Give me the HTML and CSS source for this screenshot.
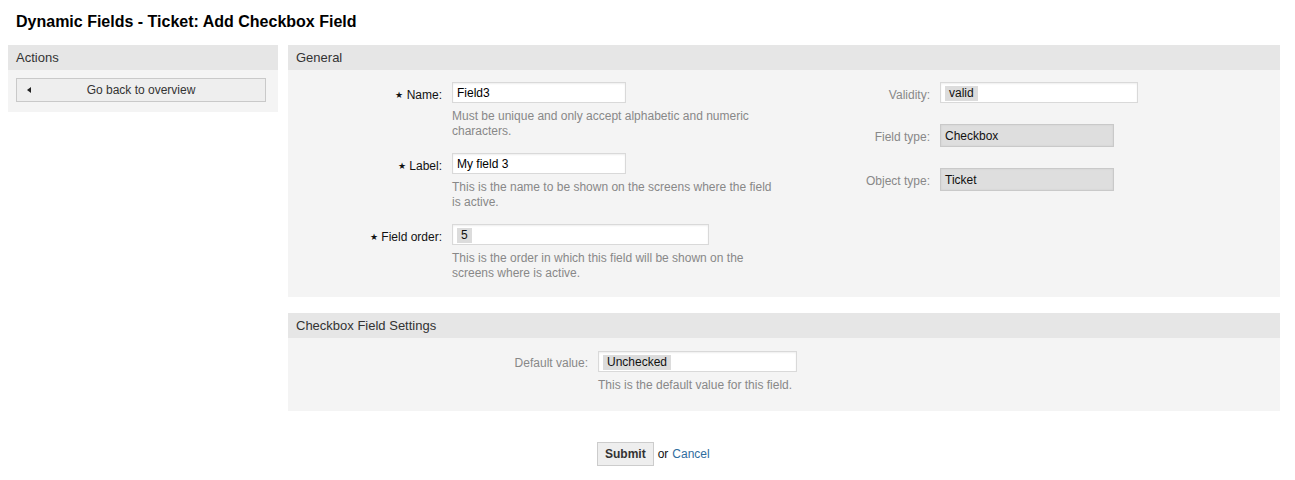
FILE: index.html
```html
<!DOCTYPE html>
<html lang="en">
<head>
<meta charset="utf-8">
<title>Dynamic Fields - Ticket: Add Checkbox Field</title>
<link rel="stylesheet" href="styles.css">
</head>
<body>
<h1 class="page-title">Dynamic Fields - Ticket: Add Checkbox Field</h1>
<div class="layout">
  <aside class="sidebar">
    <div class="box-header">Actions</div>
    <div class="box-body sidebar-body">
      <a class="back-btn" href="#"><span class="tri"></span><span class="back-text">Go back to overview</span></a>
    </div>
  </aside>
  <main class="main">
    <section class="box">
      <div class="box-header">General</div>
      <div class="box-body general">
        <div class="col col-left">
          <div class="row">
            <label class="lbl"><span class="star">★</span> Name:</label>
            <div class="field">
              <div class="input w174">Field3</div>
              <p class="help">Must be unique and only accept alphabetic and numeric<br>characters.</p>
            </div>
          </div>
          <div class="row">
            <label class="lbl"><span class="star">★</span> Label:</label>
            <div class="field">
              <div class="input w174">My field 3</div>
              <p class="help">This is the name to be shown on the screens where the field<br>is active.</p>
            </div>
          </div>
          <div class="row">
            <label class="lbl"><span class="star">★</span> Field order:</label>
            <div class="field">
              <div class="input w257"><span class="tag">5</span></div>
              <p class="help">This is the order in which this field will be shown on the<br>screens where is active.</p>
            </div>
          </div>
        </div>
        <div class="col col-right">
          <div class="row">
            <label class="lbl lbl-muted">Validity:</label>
            <div class="field">
              <div class="input w198"><span class="tag">valid</span></div>
            </div>
          </div>
          <div class="row">
            <label class="lbl lbl-muted">Field type:</label>
            <div class="field">
              <div class="select w174">Checkbox</div>
            </div>
          </div>
          <div class="row">
            <label class="lbl lbl-muted">Object type:</label>
            <div class="field">
              <div class="select w174">Ticket</div>
            </div>
          </div>
        </div>
      </div>
    </section>
    <section class="box settings">
      <div class="box-header">Checkbox Field Settings</div>
      <div class="box-body settings-body">
        <div class="row">
          <label class="lbl lbl-muted">Default value:</label>
          <div class="field">
            <div class="input w199"><span class="tag">Unchecked</span></div>
            <p class="help">This is the default value for this field.</p>
          </div>
        </div>
      </div>
    </section>
    <div class="actions">
      <button class="submit" type="button">Submit</button>
      <span class="or">or</span>
      <a class="cancel" href="#">Cancel</a>
    </div>
  </main>
</div>
</body>
</html>
```

FILE: styles.css
```css
* { box-sizing: border-box; }

body {
  margin: 0;
  background: #fff;
  color: #000;
  font-family: "Liberation Sans", Arial, Helvetica, sans-serif;
  font-size: 12px;
}

.page-title {
  margin: 0 0 13px;
  padding: 12px 16px 0;
  font-size: 16px;
  line-height: 20px;
  font-weight: bold;
  color: #000;
}

.layout {
  display: flex;
  align-items: flex-start;
  gap: 10px;
  padding-left: 8px;
}

.sidebar { width: 270px; }
.main { width: 992px; }

.box-header {
  height: 25px;
  line-height: 26px;
  padding: 0 8px;
  background: #e6e6e6;
  color: #333;
  font-size: 13px;
}

.box-body { background: #f4f4f4; }

.sidebar-body { padding: 8px 12px 10px 8px; }

.back-btn {
  display: grid;
  grid-template-columns: 1fr auto 1fr;
  align-items: center;
  height: 24px;
  border: 1px solid #c9c9c9;
  background: #eeeeee;
  color: #333;
  text-decoration: none;
  font-size: 12px;
}

.tri {
  justify-self: start;
  margin-left: 10px;
  width: 0;
  height: 0;
  border-top: 3px solid transparent;
  border-bottom: 3px solid transparent;
  border-right: 4px solid #222;
}

.back-text { line-height: 22px; }

.general {
  display: flex;
  padding: 12px 0 16px;
}

.col-left { width: 496px; }
.col-right { flex: 1; }

.row {
  display: grid;
  grid-template-columns: 154px auto;
  column-gap: 10px;
  margin-bottom: 14px;
}
.row:last-child { margin-bottom: 0; }

.col-right .row {
  grid-template-columns: 146px auto;
  margin-bottom: 21px;
}
.col-right .row:last-child { margin-bottom: 0; }

.lbl {
  text-align: right;
  padding-top: 5px;
  line-height: 16px;
  color: #111;
}
.lbl-muted { color: #888; }

.star {
  font-size: 9px;
  vertical-align: 1px;
}

.input {
  display: flex;
  align-items: center;
  height: 21px;
  padding: 1px 4px 0;
  border: 1px solid #d9d9d9;
  background: #fff;
  box-shadow: inset 0 1px 2px rgba(0, 0, 0, 0.07);
  color: #000;
  line-height: 19px;
}

.select {
  height: 23px;
  padding: 1px 4px 0;
  border: 1px solid #c9c9c9;
  background: #dedede;
  box-shadow: inset 0 0 2px rgba(0, 0, 0, 0.08);
  color: #111;
  line-height: 20px;
}

.w174 { width: 174px; }
.w198 { width: 198px; }
.w199 { width: 199px; }
.w257 { width: 257px; }

.tag {
  display: inline-block;
  padding: 0 4px;
  background: #dcdcdc;
  line-height: 15px;
  color: #111;
}

.help {
  margin: 6px 0 0;
  line-height: 15px;
  color: #888;
}

.settings { margin-top: 16px; }

.settings-body { padding: 13px 0 18px; }
.settings-body .row { grid-template-columns: 300px auto; column-gap: 10px; }
.settings-body .lbl { padding-top: 4px; }

.actions {
  display: flex;
  align-items: center;
  gap: 4px;
  margin-top: 31px;
  padding-left: 309px;
}

.submit {
  height: 24px;
  padding: 0 7px;
  border: 1px solid #cccccc;
  background: #eeeeee;
  color: #333;
  font-family: inherit;
  font-size: 12px;
  font-weight: bold;
}

.or { color: #111; }

.cancel {
  color: #2f6d9e;
  text-decoration: none;
}
```
